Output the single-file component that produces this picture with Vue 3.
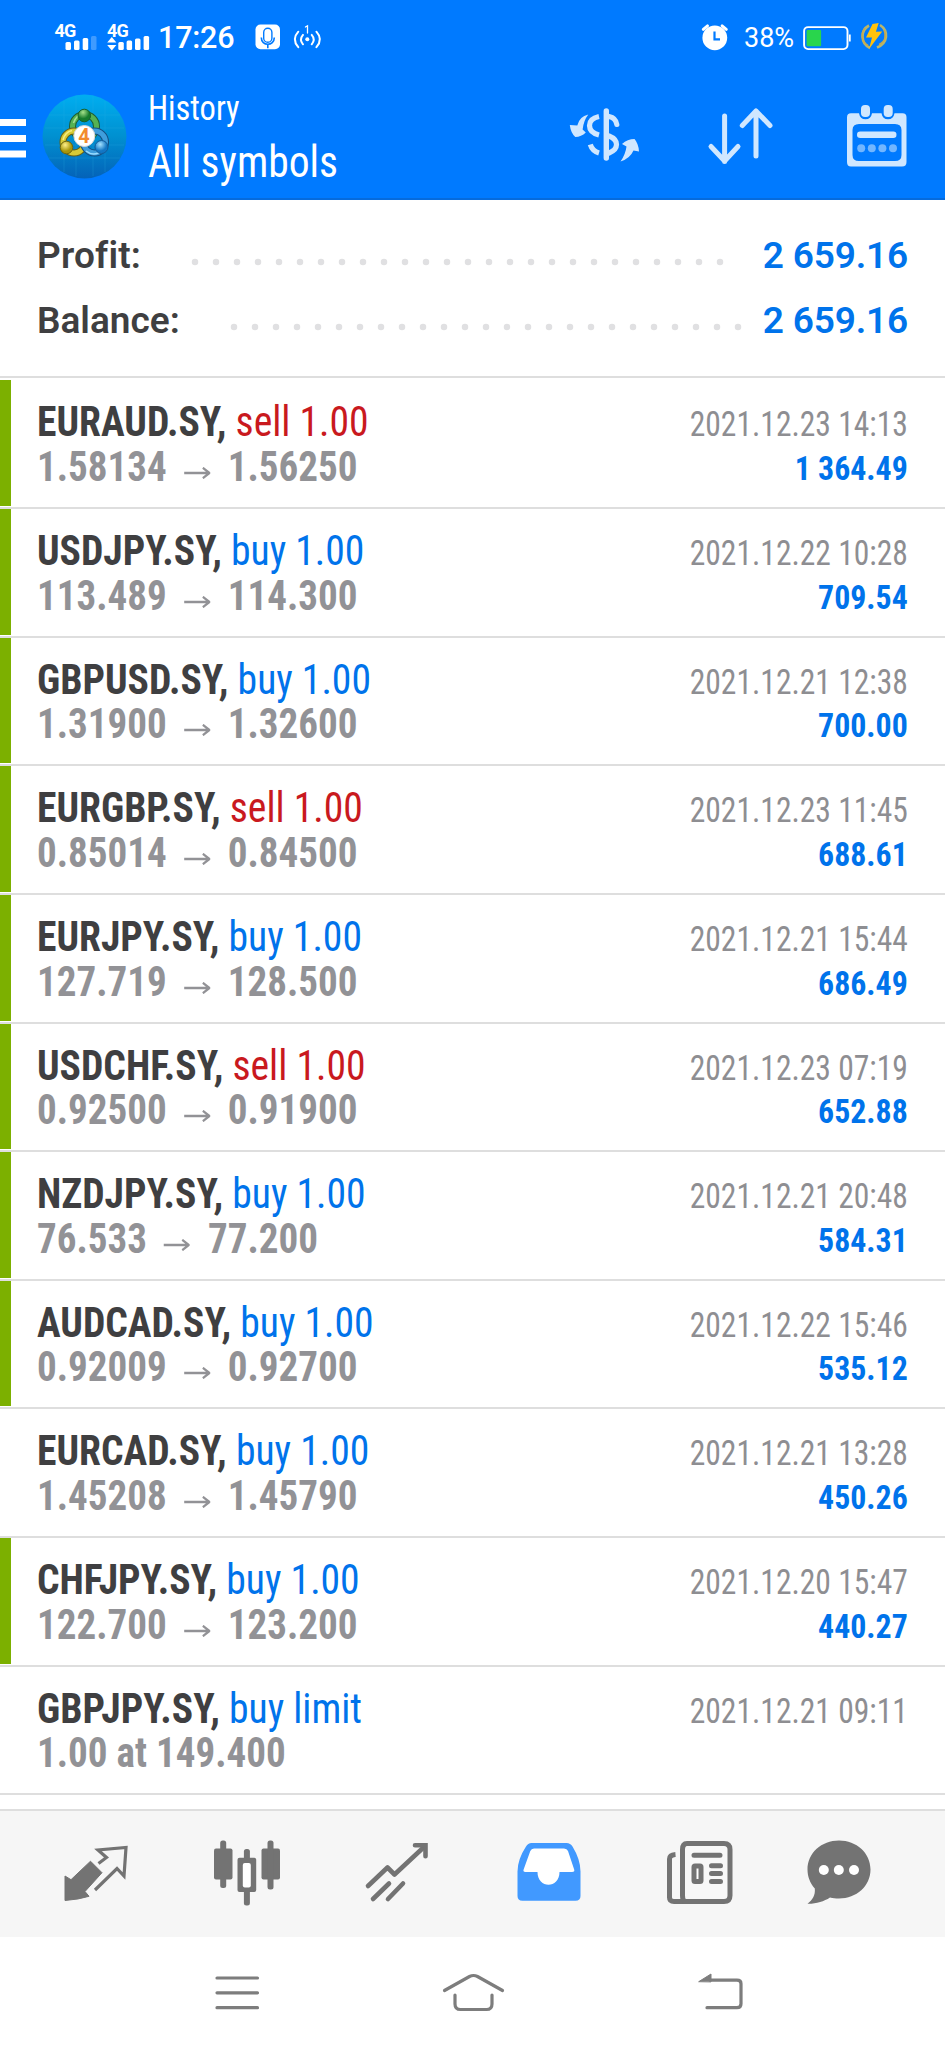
<script setup>
const orders = [
  { symbol: 'EURAUD.SY', side: 'sell', size: '1.00', open: '1.58134', close: '1.56250', date: '2021.12.23 14:13', profit: '1 364.49', tp: true },
  { symbol: 'USDJPY.SY', side: 'buy', size: '1.00', open: '113.489', close: '114.300', date: '2021.12.22 10:28', profit: '709.54', tp: true },
  { symbol: 'GBPUSD.SY', side: 'buy', size: '1.00', open: '1.31900', close: '1.32600', date: '2021.12.21 12:38', profit: '700.00', tp: true },
  { symbol: 'EURGBP.SY', side: 'sell', size: '1.00', open: '0.85014', close: '0.84500', date: '2021.12.23 11:45', profit: '688.61', tp: true },
  { symbol: 'EURJPY.SY', side: 'buy', size: '1.00', open: '127.719', close: '128.500', date: '2021.12.21 15:44', profit: '686.49', tp: true },
  { symbol: 'USDCHF.SY', side: 'sell', size: '1.00', open: '0.92500', close: '0.91900', date: '2021.12.23 07:19', profit: '652.88', tp: true },
  { symbol: 'NZDJPY.SY', side: 'buy', size: '1.00', open: '76.533', close: '77.200', date: '2021.12.21 20:48', profit: '584.31', tp: true },
  { symbol: 'AUDCAD.SY', side: 'buy', size: '1.00', open: '0.92009', close: '0.92700', date: '2021.12.22 15:46', profit: '535.12', tp: true },
  { symbol: 'EURCAD.SY', side: 'buy', size: '1.00', open: '1.45208', close: '1.45790', date: '2021.12.21 13:28', profit: '450.26', tp: false },
  { symbol: 'CHFJPY.SY', side: 'buy', size: '1.00', open: '122.700', close: '123.200', date: '2021.12.20 15:47', profit: '440.27', tp: true },
  { symbol: 'GBPJPY.SY', side: 'buy', size: 'limit', note: '1.00 at 149.400', date: '2021.12.21 09:11', profit: '', tp: false },
]
</script>

<template>
  <div class="screen">
    <header class="top">
      <div class="status">
        <svg class="signals" width="106" height="60" viewBox="50 10 106 60">
          <g fill="#fff">
            <text x="54.5" y="36.5" class="net">4G</text>
            <rect x="65.5" y="42" width="5.5" height="8" rx="1.5" />
            <rect x="74" y="40.5" width="5.5" height="9.5" rx="1.5" />
            <rect x="82.7" y="38" width="5.5" height="12" rx="1.5" />
            <rect x="91" y="36" width="5.5" height="14" rx="1.5" opacity=".25" />
            <text x="107" y="36.5" class="net">4G</text>
            <path d="M111.8 37l4.6 5.6h-9.2zM111.8 50.6l4.6-5.6h-9.2z" />
            <rect x="118.3" y="42" width="5.5" height="8" rx="1.5" />
            <rect x="126.6" y="40.5" width="5.5" height="9.5" rx="1.5" />
            <rect x="135" y="38.5" width="5.5" height="11.5" rx="1.5" />
            <rect x="143.6" y="36" width="5.5" height="14" rx="1.5" />
          </g>
        </svg>
        <span class="clock">17:26</span>
        <svg class="mic" width="80" height="60" viewBox="250 10 80 60" fill="none">
          <rect x="255.5" y="24.5" width="24.5" height="24.8" rx="5" fill="#fff" />
          <rect x="263.7" y="28.3" width="8.2" height="14" rx="4.1" stroke="#007aff" stroke-width="1.4" />
          <path d="M261.3 37.5c0 9 13 9 13 0M267.8 44.5v3.7" stroke="#007aff" stroke-width="1.6" />
          <g stroke="#fff" stroke-width="2" stroke-linecap="round">
            <path d="M298.3 31.700q-7 7.700 0 15.500M303 34.900q-4 4.600 0 9.400M316.400 31.700q7 7.700 0 15.500M311.700 34.900q4 4.600 0 9.400" />
            <circle cx="307.300" cy="39.300" r="2" fill="#fff" stroke="none" />
            <path d="M305.400 27l2.100-1.200v7.200" stroke-width="1.300" />
          </g>
        </svg>
        <span class="grow"></span>
        <svg width="36" height="60" viewBox="697 10 36 60">
          <circle cx="714.800" cy="37.800" r="12.400" fill="#fff" />
          <path d="M703.300 29.300l4.200-3.400M726.300 29.300l-4.200-3.400" stroke="#fff" stroke-width="3" stroke-linecap="round" />
          <path d="M714.500 31.500v7.800h5.500" fill="none" stroke="#007aff" stroke-width="2.200" />
        </svg>
        <span class="percent">38%</span>
        <svg class="battery" width="94" height="60" viewBox="798 10 94 60" fill="none">
          <rect x="804.100" y="27.100" width="43.400" height="22" rx="4" stroke="#fff" stroke-width="1.900" />
          <rect x="806.600" y="30" width="14.500" height="16.300" rx="1" fill="#29d54c" />
          <path d="M849.800 34.500v7" stroke="#fff" stroke-width="1.800" />
          <path d="M869 25.500c-9 5-8.500 18 1 22.500M880 25c9 6 8 18-3 22.500" stroke="#b7b66d" stroke-width="2.600" />
          <path d="M865 28c-5 6-3 14 3 17.500M884 30c3 6 1 12-5 14.500" stroke="#c8a94c" stroke-width="1.500" />
          <path d="M872.500 24l6.200-1-2.800 8.800 6.300-.3L869 49l3-11.500h-6z" fill="#ffc20d" />
        </svg>
      </div>

      <div class="bar">
        <svg class="brand" width="148" height="112" viewBox="0 80 148 112">
          <defs>
            <linearGradient id="disc" x1="0" y1="0" x2="0" y2="1">
              <stop offset="0" stop-color="#00aef0" /><stop offset=".5" stop-color="#0090d0" /><stop offset="1" stop-color="#0462b8" />
            </linearGradient>
            <radialGradient id="gr" cx=".4" cy=".25"><stop offset="0" stop-color="#a5e08a" /><stop offset="1" stop-color="#167c2c" /></radialGradient>
            <radialGradient id="ye" cx=".4" cy=".3"><stop offset="0" stop-color="#fff08a" /><stop offset="1" stop-color="#a89508" /></radialGradient>
            <radialGradient id="bl" cx=".4" cy=".3"><stop offset="0" stop-color="#a5e2ff" /><stop offset="1" stop-color="#1276c4" /></radialGradient>
          </defs>
          <path d="M0 119h26v7H0zM0 135h26v7H0zM0 150.500h26v7H0z" fill="#fff" />
          <circle cx="84.500" cy="136.500" r="42" fill="url(#disc)" />
          <path d="M64 101v71M76 96v80M93 96v80M105 101v71M49 115h71M45 128h79M45 145h79M49 158h71" stroke="#35b4e8" stroke-width=".7" opacity=".3" />
          <g fill="none">
            <circle cx="84.500" cy="126.500" r="12" stroke="#1e5d35" stroke-width="7" />
            <circle cx="84.500" cy="126.500" r="12" stroke="#55b253" stroke-width="5" />
            <path d="M73.500 123q3-9 11-9.500" stroke="#a6dd91" stroke-width="1.500" />
            <circle cx="74" cy="142" r="11" stroke="#655f17" stroke-width="7" />
            <circle cx="74" cy="142" r="11" stroke="#d6ca36" stroke-width="5" />
            <path d="M63 140q2-8 9-9.500" stroke="#f5ed82" stroke-width="1.500" />
            <circle cx="94.500" cy="142" r="11" stroke="#144e80" stroke-width="7" />
            <circle cx="94.500" cy="142" r="11" stroke="#3f9edc" stroke-width="5" />
            <path d="M86 151q9 7 17-2" stroke="#9bdcff" stroke-width="1.500" />
          </g>
          <circle cx="84.300" cy="115.500" r="6.300" fill="url(#gr)" stroke="#17602a" />
          <circle cx="66.500" cy="147.500" r="6.300" fill="url(#ye)" stroke="#6d6610" />
          <circle cx="101.500" cy="147" r="6.500" fill="url(#bl)" stroke="#145c9a" />
          <circle cx="84.300" cy="136" r="10.500" fill="#fff" stroke="#d7d7d7" />
          <text x="84" y="143" class="four">4</text>
        </svg>
        <div class="titles">
          <div class="sub">History</div>
          <div class="main">All symbols</div>
        </div>
        <svg class="tools" width="380" height="112" viewBox="560 80 380 112" fill="none">
          <g stroke="#d0e7ff" stroke-linecap="round" stroke-linejoin="round">
            <path d="M606.300 111v47" stroke-width="5.400" />
            <path d="M599 116.500q-9.500 2-9.500 9t9.500 9.500M590.300 144.500q2 6.500 8.700 8.500" stroke-width="5.200" stroke-linecap="butt" />
            <path d="M609 116.500q7 1.500 7.800 8M609 136q7.500 3 7.500 8.500t-7.500 8.500" stroke-width="5.200" />
            <path d="M724.600 116v45.500M711 146.500l13.600 14.500L738 146.500" stroke-width="5" />
            <path d="M756 156v-45M742.300 125.500l13.700-14.500 14 14.500" stroke-width="5" />
          </g>
          <g fill="#d0e7ff">
            <path d="M588.300 114.500q-9 2-11 11l-7.500-.5q1 8 5.500 12 6-.2 10.500-4.500l-3.200-3q1-9 5.700-15z" />
            <path d="M620.500 161.500q9.500-3 13-11l5.500 1q-.5-8-4.500-12.500-7 0-12.500 5l4.500 2.500q-1 8-6 15z" />
            <path fill-rule="evenodd" d="M851 113.300h8q1 6 6.500 6t6.500-6h9.500q1 6 6.500 6t6.500-6h8q4 0 4 4V162q0 4.500-4.500 4.500H851q-4 0-4-4.500v-44.500q0-4.200 4-4.200zM859 124q-6.500 0-6.500 6v25q0 6 6.500 6h36q6.500 0 6.500-6v-25q0-6-6.500-6z" />
            <rect x="861" y="105" width="9" height="12" rx="4" />
            <rect x="883.700" y="105" width="9" height="12" rx="4" />
            <rect x="857" y="131.500" width="39.500" height="6.500" rx="3.200" />
            <g opacity=".55"><circle cx="861.200" cy="148.300" r="4" /><circle cx="871.800" cy="148.300" r="4" /><circle cx="882.400" cy="148.300" r="4" /><circle cx="893" cy="148.300" r="4" /></g>
          </g>
        </svg>
      </div>
    </header>

    <section class="summary">
      <div class="line">
        <b class="profit-label">Profit:</b>
        <svg class="dots" width="600" height="8"><line x1="46" y1="4" x2="574" y2="4" /></svg>
        <strong>2 659.16</strong>
      </div>
      <div class="line">
        <b>Balance:</b>
        <svg class="dots" width="600" height="8"><line x1="85" y1="4" x2="594" y2="4" /></svg>
        <strong>2 659.16</strong>
      </div>
    </section>

    <main class="list">
      <article v-for="o in orders" :key="o.symbol" class="row" :class="{ tp: o.tp }">
        <div class="left">
          <div class="name"><b>{{ o.symbol }},</b> <span :class="o.side">{{ o.side }} {{ o.size }}</span></div>
          <div v-if="o.note" class="price">{{ o.note }}</div>
          <div v-else class="price">{{ o.open }}<svg class="arrow" width="28" height="12" viewBox="0 0 28 12"><path d="M0 6h26.500M20 .8l7 5.200-7 5.200" /></svg>{{ o.close }}</div>
        </div>
        <div class="right">
          <div class="date">{{ o.date }}</div>
          <div class="profit">{{ o.profit }}</div>
        </div>
      </article>
    </main>

    <nav class="tabs">
      <svg viewBox="21 1812 150.500 125">
        <path d="M65 1876l6 3.700 19.500-18.500 11.500 11.500-17 18.800 4 4.800q-10 3.200-24 4.200z" fill="#737373" stroke="#737373" stroke-linejoin="round" />
        <path d="M95 1890l22-21.500 7 7.500 2-28.500-28 2.500 8.500 7.500-8 6" fill="none" stroke="#737373" stroke-width="3.200" />
      </svg>
      <svg viewBox="171.500 1812 150.500 125">
        <g fill="#737373">
          <rect x="213.500" y="1848.500" width="18.500" height="31" rx="2" /><rect x="219.700" y="1840.500" width="6" height="47.500" rx="2.500" />
          <rect x="261" y="1848.500" width="18.500" height="31" rx="2" /><rect x="267" y="1840.500" width="6" height="49" rx="2.500" />
          <rect x="243.400" y="1849" width="6" height="56.500" rx="2.500" /><rect x="237" y="1857.700" width="18.700" height="34.300" rx="2" />
        </g>
        <rect x="242.300" y="1863" width="8" height="24.500" rx="2" fill="#fff" />
      </svg>
      <svg viewBox="322 1812 150.500 125">
        <path d="M368 1886l19.500-18.500 7 7L424 1847M389 1883.500l-16 15.500M403 1883.500l-15 15.500" fill="none" stroke="#737373" stroke-width="4.600" stroke-linecap="round" stroke-linejoin="round" />
        <path d="M415 1845.300h10.500v11" fill="none" stroke="#737373" stroke-width="4.600" stroke-linecap="round" />
      </svg>
      <svg viewBox="472.500 1812 150.500 125">
        <path d="M531 1843h35q4 0 6 3.500 8 13 8 25V1896q0 4.700-5 4.700h-53q-5 0-5-4.700v-24.500q0-12 8.500-25 2-3.500 5.500-3.500z" fill="#4199ff" />
        <path d="M533.500 1848.500h30q3 0 4 2.500l6 18q1.300 3-2 3H559c0 17-22 17-22 0h-12q-3 0-1.700-3l6.500-18q1-2.500 3.700-2.500z" fill="#fff" />
      </svg>
      <svg viewBox="623 1812 150.500 125">
        <path d="M684 1901.500h-10q-4.500 0-4.500-4v-38.500q0-4 6-4.500" fill="none" stroke="#737373" stroke-width="5" />
        <path d="M687 1843.500h37q6 0 6 6v46q0 6-6 6H684.500q-2-1.500-2-6v-46q0-6 4.500-6z" fill="#f8f8f8" stroke="#737373" stroke-width="5" />
        <path d="M694 1855.300h26M711.500 1865.700h9M711.500 1873.500h9M711.500 1881.500h9" stroke="#737373" stroke-width="5" stroke-linecap="round" />
        <rect x="694" y="1866" width="7" height="15.500" rx="1" fill="#fff" stroke="#737373" stroke-width="5" />
      </svg>
      <svg viewBox="773.500 1812 150.500 125">
        <path d="M838.500 1840.500c17.500 0 31.500 12.500 31.500 29s-14 29-31.500 29c-3.500 0-6-.3-9-1-6 4-14 6.500-22.500 6.300 5-4 8-8.500 7.300-15.300C809.500 1883 807 1876.500 807 1869.500c0-16.500 14-29 31.500-29z" fill="#737373" />
        <circle cx="823.300" cy="1870" r="5" fill="#fff" /><circle cx="838.300" cy="1870" r="5" fill="#fff" /><circle cx="853.500" cy="1870" r="5" fill="#fff" />
      </svg>
    </nav>

    <footer class="system">
      <svg viewBox="117 1937 240 111"><path d="M217 1978h40.500M217 1992.800h40.500M217 2007.700h40.500" /></svg>
      <svg viewBox="357 1937 240 111"><path d="M444.500 1990.500l25-14q4-2 8 0l25 14M455 1995v9q0 5.500 5.500 5.500h26q5.500 0 5.500-5.500v-9" /></svg>
      <svg viewBox="597 1937 240 111"><path d="M707 2007.700h30q4 0 4-4v-20q0-3.500-4-3.500h-27" /><path class="solid" d="M699 1981.500l12-7.500v7.500z" /></svg>
    </footer>
  </div>
</template>

<style>
body { margin: 0; background: #fff; }
</style>

<style scoped>
.screen { width: 945px; height: 2048px; display: flex; flex-direction: column; overflow: hidden; background: #fff; font-family: "Roboto Condensed", Roboto, sans-serif; font-stretch: 75%; white-space: nowrap; }
.top { height: 200px; flex: none; background: #007aff; color: #fff; box-sizing: border-box; border-bottom: 2px solid #066bdc; }
.status { height: 80px; display: flex; align-items: center; padding: 0 53px 0 50px; box-sizing: border-box; font-family: Roboto, sans-serif; font-stretch: 100%; }
.status svg { flex: none; }
.net { font: 700 18px Roboto, sans-serif; letter-spacing: -.8px; }
.clock { font-size: 30.500px; font-weight: 500; line-height: 60px; height: 64px; width: 94px; padding-left: 2px; box-sizing: border-box; letter-spacing: -.2px; }
.grow { flex: 1; }
.percent { font-size: 27px; line-height: 58px; width: 65px; padding-left: 11px; box-sizing: border-box; height: 62px; }
.bar { display: flex; height: 112px; }
.bar svg { flex: none; }
.four { font: 700 20px Roboto, sans-serif; fill: #f28b2e; text-anchor: middle; }
.titles { flex: none; width: 412px; padding-top: 5px; box-sizing: border-box; }
.sub, .main, .name, .price { transform-origin: left center; width: max-content; }
.sub { font-size: 34.500px; line-height: 46px; transform: scaleX(.94); }
.main { font-size: 45px; line-height: 62px; transform: scaleX(.924); }
.summary { height: 177.500px; box-sizing: border-box; border-bottom: 2px solid #dedede; padding: 22.500px 37px 0; flex: none; font-family: Roboto, sans-serif; font-stretch: 100%; font-size: 37px; font-weight: 600; }
.line { height: 65.500px; line-height: 65.500px; display: flex; color: #3f3f41; }
.line strong { color: #0073eb; font-weight: 600; margin-left: auto; letter-spacing: -.15px; }
.line b { flex: none; font-weight: 600; width: 112px; }
.line .profit-label { letter-spacing: .2px; }
.dots { flex: none; margin: 35px -20px 0 0; }
.dots line { stroke: #e0e0e2; stroke-width: 6.500; stroke-linecap: round; stroke-dasharray: 0 21; }
.list { padding-top: 2.900px; flex: none; }
.row { height: 128.630px; box-sizing: border-box; border-bottom: 2px solid #dedede; padding: 20px 37px 0 37px; display: flex; justify-content: space-between; position: relative; }
.row.tp::before { content: ""; position: absolute; left: 0; top: 0; bottom: 1px; width: 10.700px; background: #7cb000; }
.name, .price { font-size: 41.700px; line-height: 44.700px; }
.name { color: #3f3f41; transform: scaleX(.95); }
.buy { color: #0073eb; }
.sell { color: #c9191e; }
.price { color: #929296; font-weight: 700; transform: scaleX(.937); }
.arrow { margin: 0 19px 2px 18px; fill: none; stroke: #929296; stroke-width: 2.300; }
.right { text-align: right; }
.date, .profit { transform-origin: right center; }
.date { font-size: 34.400px; line-height: 44.700px; padding-top: 2px; color: #8e8e92; transform: scaleX(.917); }
.profit { font-size: 33.800px; line-height: 44.700px; font-weight: 700; color: #0073eb; transform: scaleX(.942); }
.tabs { margin-top: auto; flex: none; height: 128px; box-sizing: border-box; border-top: 2px solid #dedede; background: #f6f6f6; padding-left: 21px; display: grid; grid-template-columns: repeat(6, 150.500px); }
.tabs svg { width: 150.500px; height: 125px; margin-top: 1px; }
.system { flex: none; height: 111px; display: grid; grid-template-columns: repeat(3, 240px); padding-left: 117px; }
.system svg { width: 240px; height: 111px; fill: none; stroke: #7d7d7d; stroke-width: 3.200; stroke-linecap: round; }
.system .solid { fill: #7d7d7d; stroke-width: 1; }
</style>
